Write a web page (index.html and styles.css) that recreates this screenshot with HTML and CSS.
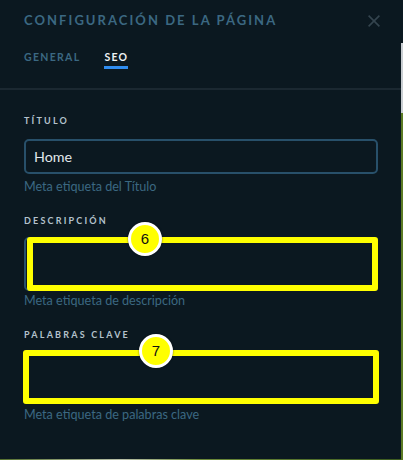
FILE: index.html
```html
<!DOCTYPE html>
<html lang="es">
<head>
<meta charset="utf-8">
<link rel="stylesheet" href="styles.css">
</head>
<body>
<div class="panel">
  <header class="head">
    <h1 class="title">CONFIGURACIÓN DE LA PÁGINA</h1>
    <svg class="close" width="12" height="12" viewBox="0 0 12 12"><path d="M0.6 0.6L11.4 11.4M11.4 0.6L0.6 11.4" stroke="#34444e" stroke-width="1.6" fill="none"/></svg>
  </header>
  <nav class="tabs">
    <span class="tab">GENERAL</span>
    <span class="tab active">SEO</span>
  </nav>
  <div class="divider"></div>
  <section class="form">
    <div class="field f1">
      <label class="label">TÍTULO</label>
      <div class="input">Home</div>
      <div class="help">Meta etiqueta del Título</div>
    </div>
    <div class="field f2">
      <label class="label">DESCRIPCIÓN</label>
      <div class="annot">
        <div class="input tall"></div>
        <div class="hl"></div>
        <div class="badge b6">6</div>
      </div>
      <div class="help">Meta etiqueta de descripción</div>
    </div>
    <div class="field f3">
      <label class="label">PALABRAS CLAVE</label>
      <div class="annot">
        <div class="input tall"></div>
        <div class="hl"></div>
        <div class="badge b7">7</div>
      </div>
      <div class="help">Meta etiqueta de palabras clave</div>
    </div>
  </section>
</div>
</body>
</html>
```
FILE: styles.css
```css
html, body { margin: 0; padding: 0; }
body {
  width: 403px;
  height: 460px;
  overflow: hidden;
  background:
    linear-gradient(to bottom, #0b1820 0 43px, #c9ced2 43px 113px, #5b7a24 113px 100%) right top / 2px 100% no-repeat,
    linear-gradient(to right, #55702e, #b8bfa8 30%, #6d8a3a 50%, #3b5a1f) left bottom / 100% 1px no-repeat,
    #0b1820;
  font-family: Lato, "Noto Sans", sans-serif;
}
.panel {
  width: 401px;
  height: 459px;
  background: #0b1820;
}
.head {
  display: flex;
  align-items: flex-start;
  justify-content: space-between;
  padding: 12px 21px 0 24px;
}
.title {
  margin: 0;
  font-size: 13px;
  font-weight: 700;
  letter-spacing: 2.05px;
  color: #3b6882;
  line-height: 16px;
}
.close { display: block; margin-top: 3px; }
.tabs {
  display: flex;
  padding: 0 24px;
  margin-top: 23px;
}
.tab {
  font-size: 10.5px;
  font-weight: 700;
  letter-spacing: 1.3px;
  color: #3b6882;
  line-height: 13px;
  padding-bottom: 2px;
  border-bottom: 3px solid transparent;
  margin-right: 24px;
}
.tab.active {
  color: #eef2f5;
  border-bottom-color: #2f8cf0;
}
.divider {
  height: 2px;
  background: #1b2831;
  margin-top: 19px;
}
.form {
  padding: 0 23px 0 24px;
  display: flex;
  flex-direction: column;
}
.field { display: flex; flex-direction: column; }
.label {
  font-size: 9px;
  font-weight: 700;
  letter-spacing: 2.2px;
  color: #b4c2cc;
  line-height: 11px;
}
.f1 .label { margin-top: 25px; }
.f2 .label, .f3 .label { margin-top: 21px; }
.input {
  box-sizing: border-box;
  height: 35px;
  border: 2px solid #28506a;
  border-radius: 5px;
  color: #e2e8ec;
  font-size: 14.3px;
  line-height: 31px;
  padding-left: 8px;
  background: #0b1820;
}
.f1 .input { margin-top: 13px; }
.help {
  font-size: 12.6px;
  color: #3b6882;
  line-height: 15px;
}
.f1 .help { margin-top: 5px; }
.f2 .help { margin-top: 2px; }
.f3 .help { margin-top: 3px; }
.annot { position: relative; }
.f2 .annot { margin-top: 11px; }
.f3 .annot { margin-top: 10px; }
.f2 .input.tall { height: 54px; }
.f3 .input.tall { height: 52px; margin: 1px 0; }
.hl {
  position: absolute;
  top: 0; bottom: 0;
  border: 6px solid #ffff00;
  border-radius: 3px;
}
.f2 .hl { left: 3px; right: 0; }
.f3 .hl { left: -1px; right: -1px; }
.badge {
  position: absolute;
  width: 34px;
  height: 34px;
  box-sizing: border-box;
  border: 3px solid #ffffff;
  border-radius: 50%;
  background: #ffff00;
  color: #111;
  font-family: "Liberation Sans", Arial, sans-serif;
  font-size: 15px;
  line-height: 28px;
  text-align: center;
  box-shadow: 0 0 2px rgba(0,0,0,0.6);
}
.b6 { left: 104px; top: -15px; }
.b7 { left: 115px; top: -16px; }
```
